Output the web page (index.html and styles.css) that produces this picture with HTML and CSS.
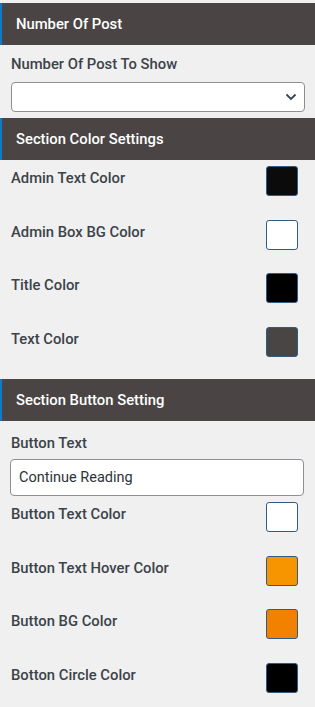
FILE: index.html
```html
<!DOCTYPE html>
<html lang="en">
<head>
  <meta charset="UTF-8">
  <meta name="viewport" content="width=device-width, initial-scale=1.0">
  <title>Settings</title>
  <link rel="stylesheet" href="styles.css">
</head>
<body>
  <!-- number of post -->
  <div class="section">
    <h3 class="section-title">Number Of Post</h3>
    <div class="section-body">
      <label class="field-label">Number Of Post To Show</label>
      <div class="select-box">
        <select class="select"></select>
        <svg class="chevron" width="12" height="8" viewBox="0 0 12 8"><path d="M1.5 1.5 L6 6 L10.5 1.5" fill="none" stroke="#3c434a" stroke-width="1.8"/></svg>
      </div>
    </div>
  </div>

  <!-- colors -->
  <div class="section colors">
    <h3 class="section-title">Section Color Settings</h3>
    <div class="section-body">
      <div class="color-row">
        <span class="field-label">Admin Text Color</span>
        <span class="swatch" style="background:#0b0b0b"></span>
      </div>
      <div class="color-row">
        <span class="field-label">Admin Box BG Color</span>
        <span class="swatch" style="background:#ffffff"></span>
      </div>
      <div class="color-row">
        <span class="field-label">Title Color</span>
        <span class="swatch" style="background:#000000"></span>
      </div>
      <div class="color-row">
        <span class="field-label">Text Color</span>
        <span class="swatch" style="background:#4a4545"></span>
      </div>
    </div>
  </div>

  <!-- button -->
  <div class="section buttons">
    <h3 class="section-title">Section Button Setting</h3>
    <div class="section-body">
      <label class="field-label">Button Text</label>
      <input class="text-input" type="text" value="Continue Reading">
      <div class="color-row">
        <span class="field-label">Button Text Color</span>
        <span class="swatch" style="background:#ffffff"></span>
      </div>
      <div class="color-row">
        <span class="field-label">Button Text Hover Color</span>
        <span class="swatch" style="background:#f69500"></span>
      </div>
      <div class="color-row">
        <span class="field-label">Button BG Color</span>
        <span class="swatch" style="background:#f38100"></span>
      </div>
      <div class="color-row">
        <span class="field-label">Botton Circle Color</span>
        <span class="swatch" style="background:#000000"></span>
      </div>
    </div>
  </div>
</body>
</html>
```

FILE: styles.css
```css
body {
  font-family: Roboto, "Liberation Sans", sans-serif;
  background-color: #f0f0f0;
  margin: 0;
  padding: 3px 0 0;
}
.section + .section {
  margin-top: 7px;
}
.section-title {
  margin: 0;
  height: 42px;
  line-height: 42px;
  padding-left: 14px;
  background-color: #4a4544;
  border-left: 2px solid #0f7acb;
  color: #fff;
  font-size: 14.8px;
  font-weight: 500;
}
.section-body {
  padding: 0 10px 0 11px;
}
.field-label {
  display: block;
  color: #3c434a;
  font-size: 14.8px;
  font-weight: 500;
  line-height: 20px;
}
.section-body > label.field-label {
  padding-top: 9px;
}
.select-box {
  position: relative;
  margin-top: 8px;
}
.select {
  display: block;
  width: 100%;
  height: 30px;
  border: 1px solid #8c8f94;
  border-radius: 4px;
  background: #fff;
  appearance: none;
  -webkit-appearance: none;
}
.chevron {
  position: absolute;
  right: 8px;
  top: 11px;
}
.section:first-child + .section {
  margin-top: 6px;
}
.colors .section-body {
  padding-top: 6px;
}
.color-row {
  display: flex;
  justify-content: space-between;
  align-items: flex-start;
  height: 53.5px;
  padding-right: 6px;
}
.colors .color-row:last-child {
  height: 45.5px;
}
.color-row .field-label {
  padding-top: 2px;
}
.swatch {
  width: 30px;
  height: 28px;
  margin-right: 1px;
  border: 1px solid #2f5b84;
  border-radius: 3px;
}
.buttons .section-body > label.field-label {
  padding-top: 12px;
}
.text-input {
  display: block;
  box-sizing: border-box;
  width: 294px;
  height: 37px;
  margin: 6px 0 6px -1px;
  padding: 0 8px;
  border: 1px solid #8c8f94;
  border-radius: 4px;
  background: #fff;
  color: #2c3338;
  font-family: Roboto, "Liberation Sans", sans-serif;
  font-size: 14.5px;
}
```
